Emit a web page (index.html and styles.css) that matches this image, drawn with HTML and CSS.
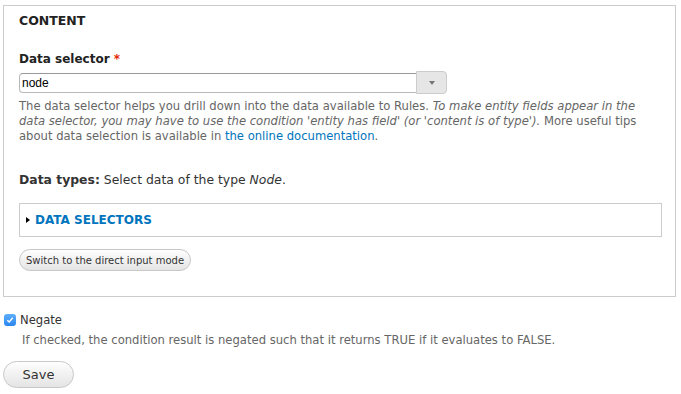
FILE: index.html
```html
<!DOCTYPE html>
<html>
<head>
<meta charset="utf-8">
<link rel="stylesheet" href="styles.css">
</head>
<body>
<div class="panel">
  <div class="legend">CONTENT</div>
  <div class="field">
    <div class="label">Data selector <span class="req">*</span></div>
    <div class="combo">
      <div class="input">node</div>
      <div class="drop"><span class="tri"></span></div>
    </div>
    <div class="desc">The data selector helps you drill down into the data available to Rules. <em>To make entity fields appear in the data selector, you may have to use the condition 'entity has field' (or 'content is of type').</em> More useful tips about data selection is available in <a href="#">the online documentation</a>.</div>
  </div>
  <div class="types"><strong>Data types:</strong> Select data of the type <em>Node</em>.</div>
  <div class="details"><span class="arrow"></span><span class="summary">DATA SELECTORS</span></div>
  <div class="btnrow"><span class="btn small">Switch to the direct input mode</span></div>
</div>
<div class="check">
  <span class="box"><svg width="8" height="8" viewBox="0 0 8 8"><path d="M1.3 4.2 L3.2 6 L6.7 1.8" fill="none" stroke="#fff" stroke-width="1.4"/></svg></span>
  <span class="clabel">Negate</span>
</div>
<div class="cdesc">If checked, the condition result is negated such that it returns TRUE if it evaluates to FALSE.</div>
<div class="actions"><span class="btn save">Save</span></div>
</body>
</html>
```
FILE: styles.css
```css
html, body { margin: 0; padding: 0; background: #fff; }
body { font-family: "DejaVu Sans", Verdana, sans-serif; color: #333; font-size: 11.6px; }
.panel { margin: 5px 5px 0 3px; border: 1px solid #ccc; padding: 0 13px 25px 15px; }
.legend { font-weight: bold; font-size: 12.5px; line-height: 16px; margin-top: 7px; color: #222; }
.field { margin-top: 22px; }
.label { font-weight: bold; font-size: 12px; line-height: 16px; color: #222; }
.req { color: #e32700; }
.combo { display: flex; align-items: center; margin-top: 4px; }
.input { width: 394px; height: 18px; border: 1px solid #b8b8b8; border-top-color: #999; border-right: none; border-radius: 4px 0 0 4px; font-family: "Liberation Sans", Arial, sans-serif; font-size: 12px; line-height: 18px; padding-left: 2px; color: #000; }
.drop { width: 29px; height: 21px; background: #e6e6e6; border: 1px solid #ccc; border-radius: 0 4px 4px 0; display: flex; align-items: center; justify-content: center; }
.tri { width: 0; height: 0; border-left: 3px solid transparent; border-right: 3px solid transparent; border-top: 4px solid #777; }
.desc { color: #666; font-size: 11.6px; line-height: 15px; margin-top: 5px; }
.desc a { color: #0074bd; text-decoration: none; }
.types { margin-top: 28px; font-size: 12.4px; line-height: 16px; }
.details { margin-top: 15px; border: 1px solid #ccc; height: 32px; display: flex; align-items: center; padding-left: 6px; }
.arrow { width: 0; height: 0; border-top: 3.5px solid transparent; border-bottom: 3.5px solid transparent; border-left: 4px solid #000; margin-right: 5px; }
.summary { color: #0074bd; font-weight: bold; font-size: 12px; }
.btnrow { margin-top: 12px; display: flex; }
.btn { display: inline-flex; align-items: center; justify-content: center; border: 1px solid #c8c8c8; border-radius: 20px; background: linear-gradient(#fefefe, #e4e4e4); color: #333; }
.small { height: 20px; padding: 0 6px; font-size: 10px; }
.check { display: flex; align-items: center; margin: 16px 0 0 4px; height: 13px; }
.box { width: 12px; height: 12px; border-radius: 3px; background: linear-gradient(#5eaefc, #2a86f0); display: flex; align-items: center; justify-content: center; }
.clabel { margin-left: 4px; font-size: 11.6px; }
.cdesc { color: #666; margin: 7px 0 0 22px; line-height: 15px; }
.actions { margin: 13px 0 0 3px; display: flex; }
.save { width: 69px; height: 25px; font-size: 13px; }
```
